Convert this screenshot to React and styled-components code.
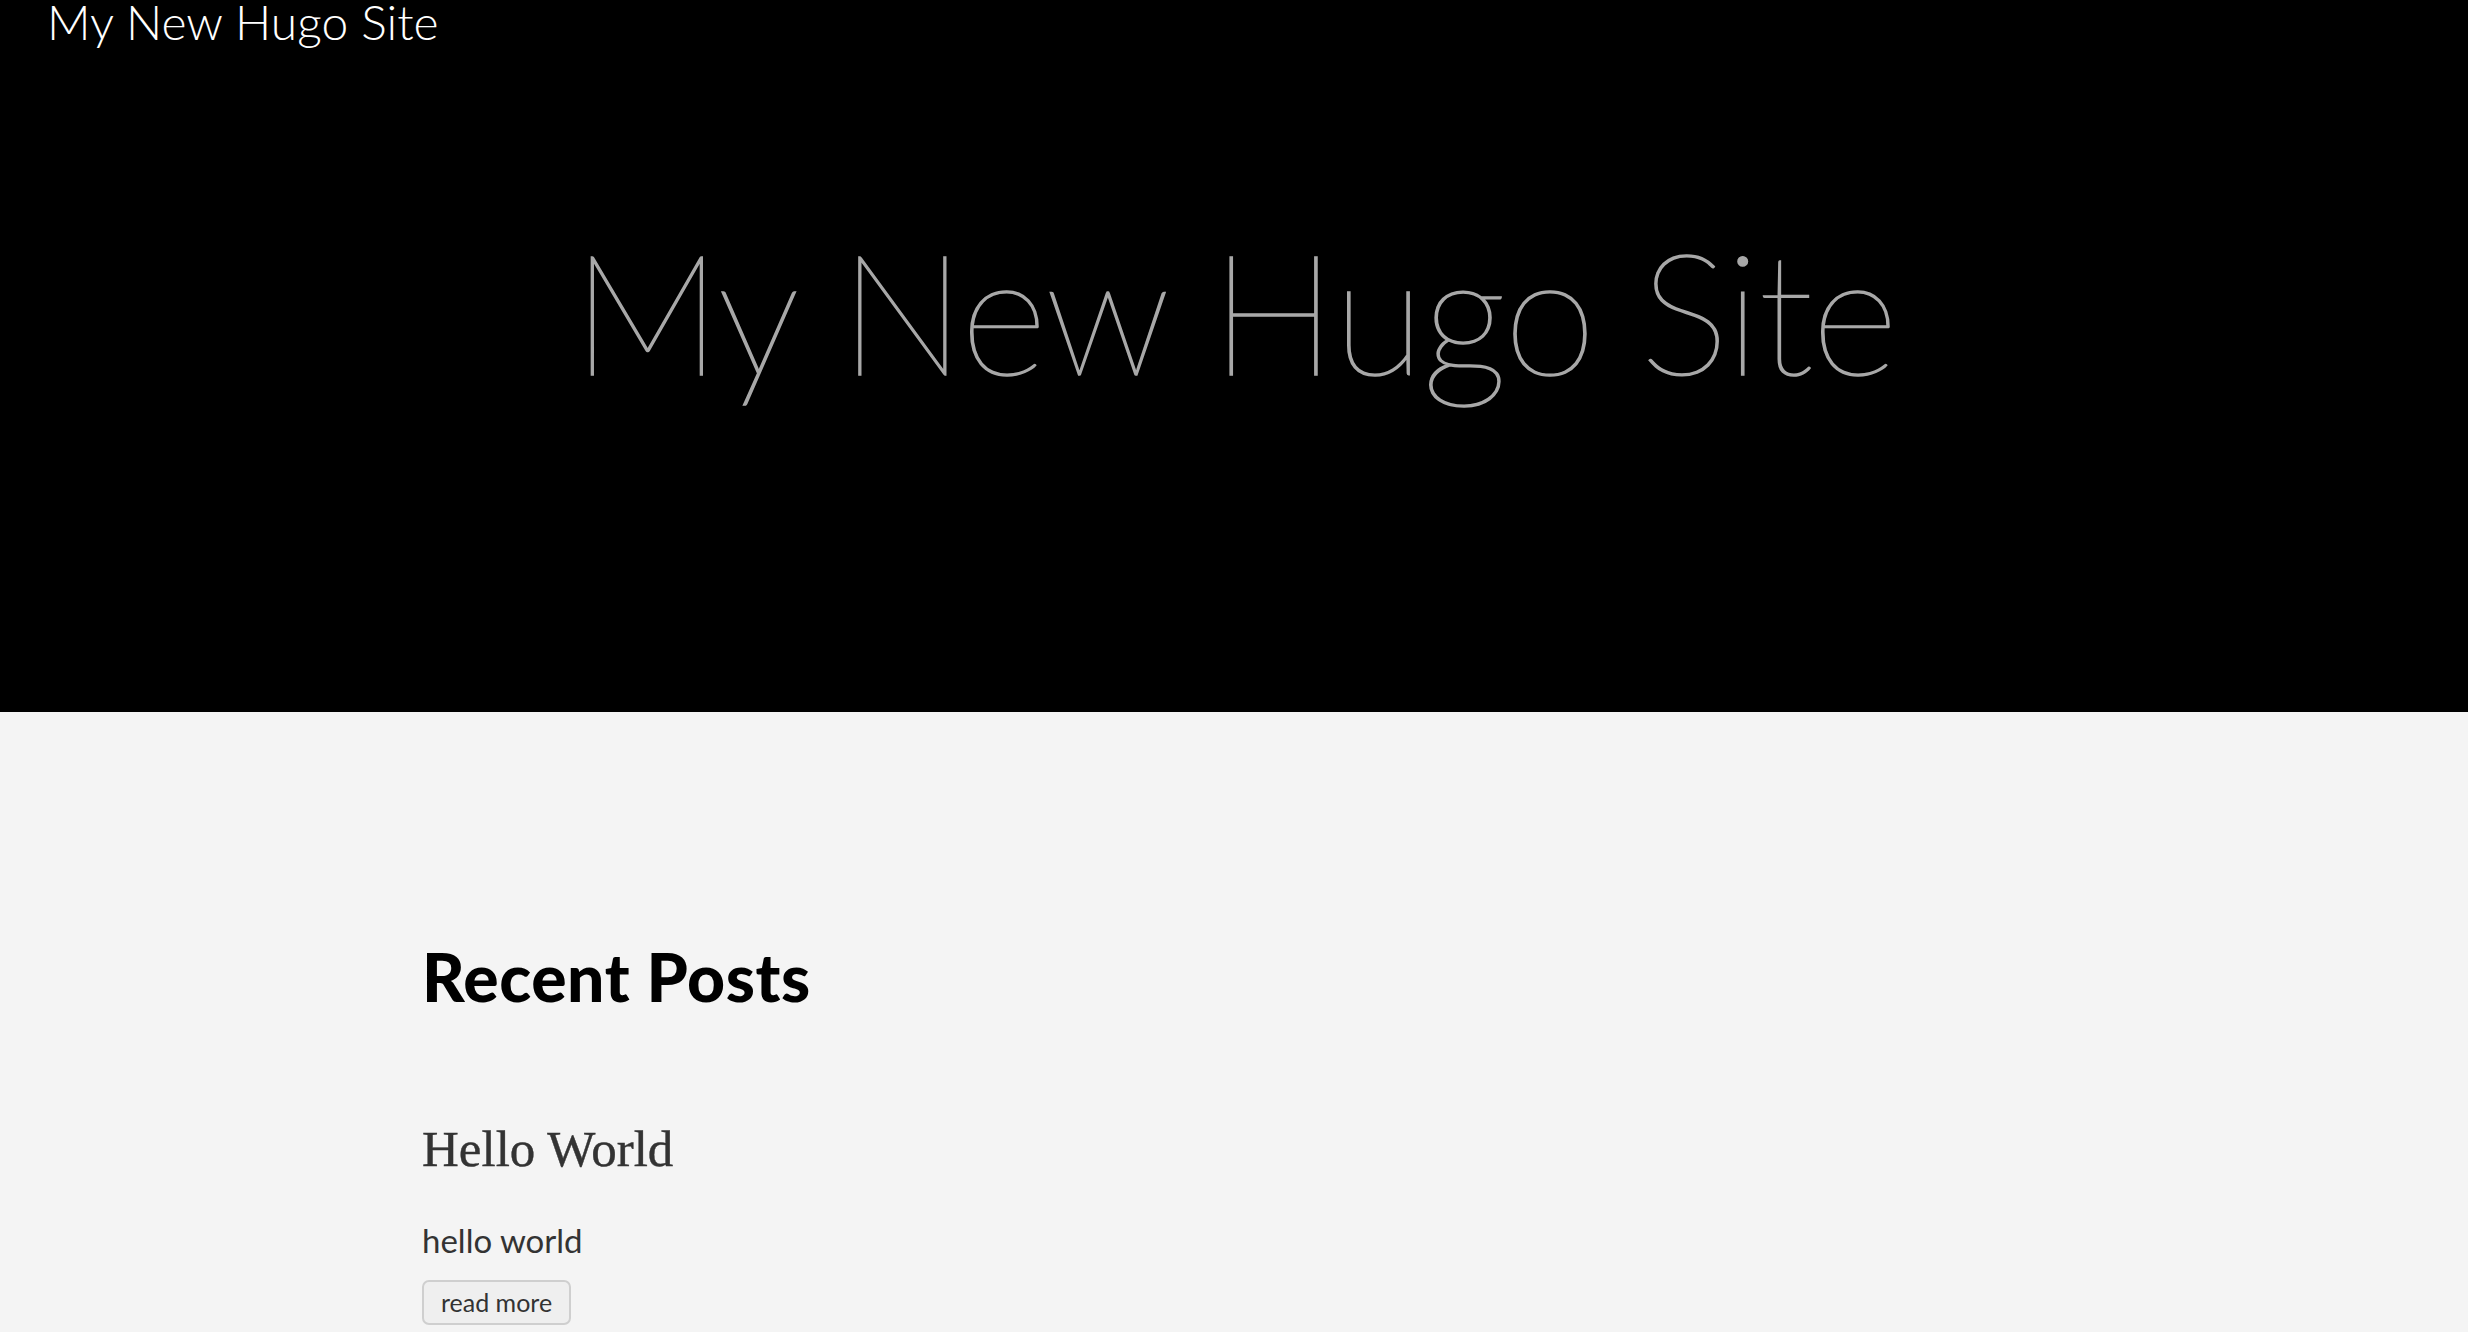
import React from 'react';
import styled, { createGlobalStyle } from 'styled-components';

const GlobalStyle = createGlobalStyle`
  html, body {
    margin: 0;
    padding: 0;
    background: #f4f4f4;
    font-family: Lato, "Open Sans", sans-serif;
  }
`;

const StyledHero = styled.header`
  display: flex;
  flex-direction: column;
  height: 712px;
  background: #000;
  overflow: hidden;
`;

const StyledNav = styled.nav`
  display: flex;
  align-items: center;
  padding: 0 47px;
  height: 48px;
`;

const StyledSiteLink = styled.a`
  font-size: 48px;
  line-height: 48px;
  font-weight: 300;
  color: #fff;
  text-decoration: none;
  margin-top: -4px;
`;

const StyledHeadline = styled.h1`
  margin: 178px 0 0;
  text-align: center;
  font-size: 168px;
  line-height: 1;
  font-weight: 200;
  color: #a8a8a8;
  -webkit-text-stroke: 1.6px #a8a8a8;
  letter-spacing: -2px;
`;

const StyledMain = styled.main`
  max-width: 1624px;
  margin: 0 auto;
  padding: 232px 0 0;
`;

const StyledSectionTitle = styled.h2`
  margin: 0 0 114px;
  font-size: 66px;
  line-height: 1;
  font-weight: 900;
  letter-spacing: 0.6px;
  color: #000;
`;

const StyledPostTitle = styled.h3`
  margin: 0 0 46px;
  font-family: "Liberation Serif", serif;
  font-size: 51px;
  line-height: 1;
  font-weight: 400;
  color: #333;
  -webkit-text-stroke: 0.4px #333;
`;

const StyledExcerpt = styled.p`
  margin: 0 0 19px;
  font-size: 33px;
  line-height: 1.2;
  color: #333;
`;

const StyledReadMore = styled.button`
  height: 45px;
  padding: 0 17px;
  font-family: inherit;
  font-size: 25px;
  color: #333;
  background: #efefef;
  border: 2px solid #cfcfcf;
  border-radius: 7px;
`;

const posts = [{ title: 'Hello World', summary: 'hello world' }];

const App = () => (
  <>
    <GlobalStyle />
    <StyledHero>
      <StyledNav>
        <StyledSiteLink href="#">My New Hugo Site</StyledSiteLink>
      </StyledNav>
      <StyledHeadline>My New Hugo Site</StyledHeadline>
    </StyledHero>
    <StyledMain>
      <StyledSectionTitle>Recent Posts</StyledSectionTitle>
      {posts.map((post) => (
        <article key={post.title}>
          <StyledPostTitle>{post.title}</StyledPostTitle>
          <StyledExcerpt>{post.summary}</StyledExcerpt>
          <StyledReadMore>read more</StyledReadMore>
        </article>
      ))}
    </StyledMain>
  </>
);

export default App;
